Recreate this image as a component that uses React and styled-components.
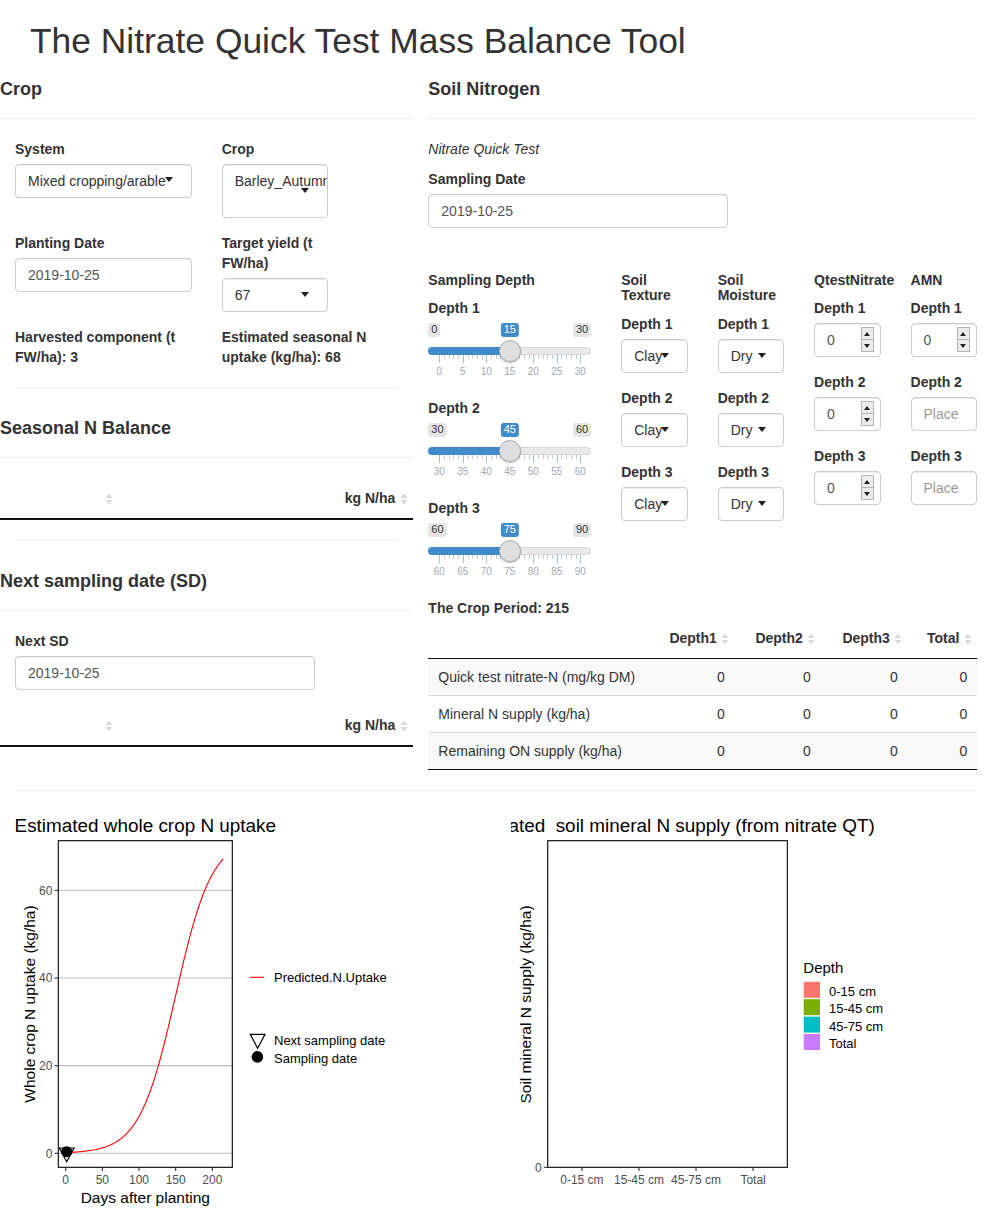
import React from 'react';
import styled, { createGlobalStyle } from 'styled-components';

const GlobalStyle = createGlobalStyle`
  html, body { margin: 0; padding: 0; background: #fff; }
  body {
    font-family: "Liberation Sans", Arial, sans-serif;
    font-size: 14px;
    line-height: 20px;
    color: #333;
  }
  * { box-sizing: border-box; }
`;

const Page = styled.div`
  width: 992px;
`;

const Title = styled.h1`
  margin: 0;
  padding: 21px 0 7.5px 30px;
  font-size: 35.4px;
  font-weight: 400;
  line-height: 40px;
  color: #333;
`;

const Main = styled.div`
  display: flex;
  align-items: flex-start;
`;

const LeftCol = styled.div`
  flex: none;
  width: 413.33px;
`;

const RightCol = styled.div`
  flex: none;
  width: 578.67px;
  padding: 0 15px;
`;

const SectionTitle = styled.h4`
  margin: 0;
  padding-top: 10px;
  font-size: 18px;
  font-weight: 700;
  line-height: 20px;
`;

const Divider = styled.hr`
  border: 0;
  border-top: 1px solid #eee;
  margin: ${(p) => (p.$top ?? 20)}px ${(p) => (p.$inset ? 15 : 0)}px ${(p) => (p.$bottom ?? 20)}px;
`;

const Inner = styled.div`
  padding: 0 15px;
`;

const InputGrid = styled.div`
  display: grid;
  grid-template-columns: 176.67px 176.67px;
  column-gap: 30px;
  align-items: start;
`;

const FormGroup = styled.div`
  margin-bottom: 15px;
  width: ${(p) => p.$w || '100%'};
  max-width: 100%;
`;

const Label = styled.label`
  display: block;
  font-weight: 700;
  margin-bottom: 5px;
  line-height: 20px;
`;

const BoldText = styled.div`
  font-weight: 700;
  line-height: 20px;
`;

const SelectBox = styled.div`
  position: relative;
  height: ${(p) => p.$h || 34}px;
  border: 1px solid #ccc;
  border-radius: 4px;
  padding: 6px 12px;
  line-height: 20px;
  color: #333;
  white-space: nowrap;
  overflow: hidden;
  background: #fff;
  box-shadow: inset 0 1px 1px rgba(0, 0, 0, 0.075);
`;

const Caret = styled.span`
  position: absolute;
  right: 17.5px;
  top: ${(p) => p.$top ?? 12}px;
  width: 0;
  height: 0;
  border-left: 4.5px solid transparent;
  border-right: 4.5px solid transparent;
  border-top: 5px solid #222;
`;

const TextInput = styled.input`
  display: block;
  width: 100%;
  height: 34px;
  border: 1px solid #ccc;
  border-radius: 4px;
  padding: 6px ${(p) => p.$padRight || 12}px 6px 12px;
  font-family: inherit;
  font-size: 14px;
  line-height: 20px;
  color: #555;
  background: #fff;
  box-shadow: inset 0 1px 1px rgba(0, 0, 0, 0.075);
  outline: none;
  &::placeholder { color: #999; }
`;

const NumberBox = styled.div`
  position: relative;
  height: 34px;
  border: 1px solid #ccc;
  border-radius: 4px;
  padding: 6px 12px;
  line-height: 20px;
  color: #555;
  box-shadow: inset 0 1px 1px rgba(0, 0, 0, 0.075);
`;

const Spinner = styled.div`
  position: absolute;
  right: 6px;
  top: 3px;
  width: 13px;
  height: 25px;
  border: 1px solid #b5b5b5;
  background: #ececec;
  display: flex;
  flex-direction: column;
`;

const SpinHalf = styled.div`
  flex: 1;
  display: flex;
  align-items: center;
  justify-content: center;
  & + & { border-top: 1px solid #b5b5b5; }
`;

const SpinArrow = styled.span`
  width: 0;
  height: 0;
  border-left: 3px solid transparent;
  border-right: 3px solid transparent;
  ${(p) => (p.$up ? 'border-bottom: 4px solid #222;' : 'border-top: 4px solid #222;')}
`;

const EmText = styled.p`
  margin: 0 0 10px;
  font-style: italic;
  line-height: 20px;
`;

const DepthRow = styled.div`
  display: grid;
  grid-template-columns: 192.89px 96.44px 96.44px 96.44px 96.45px;
  margin: 0 -15px;
`;

const DepthCol = styled.div`
  padding: 0 15px;
  min-width: 0;
`;

const ColHead = styled.h5`
  margin: 30.5px 0 10px;
  font-size: 14px;
  font-weight: 700;
  line-height: 15.4px;
  white-space: ${(p) => (p.$nowrap ? 'nowrap' : 'normal')};
`;

/* Slider */
const SliderBox = styled.div`
  position: relative;
  height: 60px;
`;

const Track = styled.div`
  position: absolute;
  left: 0;
  right: 0;
  top: 24px;
  height: 8px;
  border-radius: 4px;
  background: #e9e9e9;
  border: 1px solid #d6d6d6;
`;

const TrackFill = styled.div`
  position: absolute;
  left: 0;
  top: 24px;
  height: 8px;
  border-radius: 4px 0 0 4px;
  background: #428bca;
`;

const Handle = styled.div`
  position: absolute;
  top: 17px;
  width: 22px;
  height: 22px;
  margin-left: -11px;
  border-radius: 50%;
  background: #dedede;
  border: 1px solid #b3b3b3;
  box-shadow: 0 1px 2px rgba(0, 0, 0, 0.25);
`;

const Badge = styled.span`
  position: absolute;
  top: 0;
  font-size: 11px;
  line-height: 13.5px;
  padding: 0 3px;
  border-radius: 3px;
  background: ${(p) => (p.$active ? '#428bca' : 'rgba(0,0,0,0.1)')};
  color: ${(p) => (p.$active ? '#fff' : '#333')};
  ${(p) => p.$side === 'left' && 'left: 0;'}
  ${(p) => p.$side === 'right' && 'right: 0;'}
  ${(p) => p.$side === 'center' && 'transform: translateX(-50%);'}
`;

const GridArea = styled.div`
  position: absolute;
  left: 11px;
  right: 11px;
  top: 32px;
  height: 28px;
`;

const Tick = styled.span`
  position: absolute;
  top: 0;
  width: 1px;
  height: ${(p) => (p.$major ? 8 : 4)}px;
  background: ${(p) => (p.$major ? '#9fc0e0' : '#b9cbdc')};
`;

const TickLabel = styled.span`
  position: absolute;
  top: 11px;
  font-size: 10px;
  line-height: 12px;
  color: #a0a8b3;
  transform: translateX(-50%);
`;

function Slider({ min, max, value }) {
  const pct = (value - min) / (max - min);
  const pos = `calc(11px + (100% - 22px) * ${pct})`;
  const ticks = [];
  for (let i = 0; i <= 30; i++) {
    ticks.push(<Tick key={i} $major={i % 5 === 0} style={{ left: `${(i / 30) * 100}%` }} />);
  }
  const labels = [];
  for (let i = 0; i <= 6; i++) {
    labels.push(
      <TickLabel key={i} style={{ left: `${(i / 6) * 100}%` }}>
        {min + ((max - min) * i) / 6}
      </TickLabel>
    );
  }
  return (
    <SliderBox>
      <Track />
      <TrackFill style={{ width: pos }} />
      <GridArea>
        {ticks}
        {labels}
      </GridArea>
      <Badge $side="left">{min}</Badge>
      <Badge $side="right">{max}</Badge>
      <Badge $side="center" $active style={{ left: pos }}>{value}</Badge>
      <Handle style={{ left: pos }} />
    </SliderBox>
  );
}

function NumberInput({ value }) {
  return (
    <NumberBox>
      {value}
      <Spinner>
        <SpinHalf><SpinArrow $up /></SpinHalf>
        <SpinHalf><SpinArrow /></SpinHalf>
      </Spinner>
    </NumberBox>
  );
}

/* Tables */
const DTable = styled.table`
  width: 100%;
  table-layout: fixed;
  border-collapse: separate;
  border-spacing: 0;
  border-bottom: 1px solid #111;
`;

const ColW = styled.col`
  width: ${(p) => p.$w};
`;

const Th = styled.th`
  position: relative;
  padding: 10px 18px 10px 10px;
  border-bottom: 1px solid #111;
  font-weight: 700;
  text-align: ${(p) => p.$align || 'right'};
  line-height: 20px;
  white-space: nowrap;
`;

const Td = styled.td`
  padding: 8px 10px;
  border-top: 1px solid #ddd;
  text-align: ${(p) => p.$align || 'right'};
  line-height: 20px;
  white-space: nowrap;
`;

const Tr = styled.tr`
  background: ${(p) => (p.$odd ? '#f9f9f9' : '#fff')};
  &:first-child td { border-top: none; }
`;

const SortWrap = styled.span`
  position: absolute;
  right: 5.5px;
  top: 50%;
  margin-top: -7px;
  width: 8px;
  height: 14px;
  display: block;
`;

function SortIcon() {
  return (
    <SortWrap>
      <svg width="8" height="14" viewBox="0 0 8 14">
        <path d="M0.5 6 L4 1.5 L7.5 6 Z" fill="#d9d9d9" />
        <path d="M0.5 8 L4 12.5 L7.5 8 Z" fill="#d9d9d9" />
      </svg>
    </SortWrap>
  );
}

function HeaderOnlyTable() {
  return (
    <DTable>
      <colgroup>
        <ColW $w="118.5px" />
        <ColW $w="auto" />
      </colgroup>
      <thead>
        <tr>
          <Th><SortIcon /></Th>
          <Th>kg N/ha<SortIcon /></Th>
        </tr>
      </thead>
    </DTable>
  );
}

const CropPeriod = styled.div`
  font-weight: 700;
  line-height: 20px;
`;

const BottomRule = styled.hr`
  border: 0;
  border-top: 1px solid #eee;
  margin: 20px 15px;
`;

const PlotRow = styled.div`
  display: flex;
  gap: 30px;
  padding: 0 15px;
`;

const PlotSvg = styled.svg`
  display: block;
  width: 466px;
  height: 400px;
  overflow: hidden;
  font-family: "Liberation Sans", Arial, sans-serif;
  text { white-space: pre; }
`;

const FONT = '"Liberation Sans", Arial, sans-serif';

function UptakePlot() {
  const xs = (t) => 50.7 + 0.733 * t;
  const ys = (v) => 342.3 - 4.383 * v;
  const pts = [];
  for (let t = 0; t <= 215; t++) {
    const v = 72 / (1 + Math.exp(-0.0405 * (t - 150)));
    pts.push(`${xs(t).toFixed(2)},${ys(v).toFixed(2)}`);
  }
  return (
    <PlotSvg viewBox="0 0 466 400">
      <text x="130.3" y="20.7" fontSize="18.9" textAnchor="middle" fill="#000" fontFamily={FONT}>
        Estimated whole crop N uptake
      </text>
      {[0, 20, 40, 60].map((v) => (
        <g key={v}>
          <line x1="43.3" x2="217.3" y1={ys(v)} y2={ys(v)} stroke="#bdbdbd" strokeWidth="1.1" />
          <line x1="39.6" x2="43.3" y1={ys(v)} y2={ys(v)} stroke="#333" strokeWidth="1.1" />
          <text x="37.4" y={ys(v) + 4.3} fontSize="12" textAnchor="end" fill="#4d4d4d" fontFamily={FONT}>{v}</text>
        </g>
      ))}
      {[0, 50, 100, 150, 200].map((t) => (
        <g key={t}>
          <line x1={xs(t)} x2={xs(t)} y1="356.3" y2="360" stroke="#333" strokeWidth="1.1" />
          <text x={xs(t)} y="372.5" fontSize="12" textAnchor="middle" fill="#4d4d4d" fontFamily={FONT}>{t}</text>
        </g>
      ))}
      <polyline points={pts.join(' ')} fill="none" stroke="#ff0000" strokeWidth="1.1" />
      <polygon points="44.3,337 59.1,337 51.7,350.7" fill="none" stroke="#000" strokeWidth="1.2" />
      <circle cx="51.7" cy="340.7" r="5.5" fill="#000" />
      <rect x="43.3" y="29.7" width="174" height="326.6" fill="none" stroke="#000" strokeWidth="1.1" />
      <text x="130.3" y="392.3" fontSize="15.5" textAnchor="middle" fill="#000" fontFamily={FONT}>
        Days after planting
      </text>
      <text
        x="0"
        y="0"
        fontSize="15.5"
        textAnchor="middle"
        fill="#000"
        fontFamily={FONT}
        transform="translate(19.6 193) rotate(-90)"
      >
        Whole crop N uptake (kg/ha)
      </text>
      <line x1="235" x2="249" y1="166.3" y2="166.3" stroke="#ff0000" strokeWidth="1.1" />
      <text x="259" y="170.8" fontSize="13" fill="#000" fontFamily={FONT}>Predicted.N.Uptake</text>
      <polygon points="235.3,223.3 250,223.3 242.6,237.3" fill="none" stroke="#000" strokeWidth="1.2" />
      <text x="259" y="234.3" fontSize="13" fill="#000" fontFamily={FONT}>Next sampling date</text>
      <circle cx="242.4" cy="245.9" r="5.8" fill="#000" />
      <text x="259" y="251.8" fontSize="13" fill="#000" fontFamily={FONT}>Sampling date</text>
    </PlotSvg>
  );
}

function SupplyPlot() {
  const cats = ['0-15 cm', '15-45 cm', '45-75 cm', 'Total'];
  const xs = (i) => 36.7 + (239.6 * (0.6 + i)) / 4.2;
  const legend = [
    ['#F8766D', '0-15 cm'],
    ['#7CAE00', '15-45 cm'],
    ['#00BFC4', '45-75 cm'],
    ['#C77CFF', 'Total'],
  ];
  return (
    <PlotSvg viewBox="0 0 466 400">
      <text x="157" y="20.7" fontSize="18.9" textAnchor="middle" fill="#000" fontFamily={FONT}>
        {'Estimated  soil mineral N supply (from nitrate QT)'}
      </text>
      <rect x="36.7" y="29.7" width="239.6" height="326.6" fill="none" stroke="#000" strokeWidth="1.1" />
      <line x1="33" x2="36.7" y1="356.3" y2="356.3" stroke="#333" strokeWidth="1.1" />
      <text x="30.7" y="360.6" fontSize="12" textAnchor="end" fill="#4d4d4d" fontFamily={FONT}>0</text>
      {cats.map((c, i) => (
        <g key={c}>
          <line x1={xs(i)} x2={xs(i)} y1="356.3" y2="360" stroke="#333" strokeWidth="1.1" />
          <text x={xs(i)} y="372.5" fontSize="12" textAnchor="middle" fill="#4d4d4d" fontFamily={FONT}>{c}</text>
        </g>
      ))}
      <text
        x="0"
        y="0"
        fontSize="15.5"
        textAnchor="middle"
        fill="#000"
        fontFamily={FONT}
        transform="translate(19.6 193.5) rotate(-90)"
      >
        Soil mineral N supply (kg/ha)
      </text>
      <text x="292.3" y="161.6" fontSize="15" fill="#000" fontFamily={FONT}>Depth</text>
      {legend.map(([col, lab], i) => (
        <g key={lab}>
          <rect x="292.7" y={170.8 + i * 17.4} width="16.3" height="16" fill={col} />
          <text x="318" y={184.8 + i * 17.4} fontSize="13" fill="#000" fontFamily={FONT}>{lab}</text>
        </g>
      ))}
    </PlotSvg>
  );
}

const nutrientRows = [
  'Quick test nitrate-N (mg/kg DM)',
  'Mineral N supply (kg/ha)',
  'Remaining ON supply (kg/ha)',
];

export default function App() {
  return (
    <Page>
      <GlobalStyle />
      <Title>The Nitrate Quick Test Mass Balance Tool</Title>
      <Main>
        <LeftCol>
          <SectionTitle>Crop</SectionTitle>
          <Divider $top={19} />
          <Inner>
            <InputGrid>
              <FormGroup>
                <Label>System</Label>
                <SelectBox>
                  Mixed cropping/arable
                  <Caret $top={12} />
                </SelectBox>
              </FormGroup>
              <FormGroup $w="106px">
                <Label>Crop</Label>
                <SelectBox $h={54}>
                  Barley_Autumn
                  <Caret $top={23.5} />
                </SelectBox>
              </FormGroup>
              <FormGroup>
                <Label>Planting Date</Label>
                <TextInput readOnly value="2019-10-25" />
              </FormGroup>
              <FormGroup $w="106px">
                <Label>Target yield (t FW/ha)</Label>
                <SelectBox>
                  67
                  <Caret $top={13.5} />
                </SelectBox>
              </FormGroup>
              <BoldText>Harvested component (t FW/ha): 3</BoldText>
              <BoldText>Estimated seasonal N uptake (kg/ha): 68</BoldText>
            </InputGrid>
          </Inner>
          <Divider $inset />
          <SectionTitle>Seasonal N Balance</SectionTitle>
          <Divider $top={19} />
          <HeaderOnlyTable />
          <Divider $inset $bottom={20} />
          <SectionTitle>Next sampling date (SD)</SectionTitle>
          <Divider $top={19} />
          <Inner>
            <FormGroup $w="300px">
              <Label>Next SD</Label>
              <TextInput readOnly value="2019-10-25" />
            </FormGroup>
          </Inner>
          <HeaderOnlyTable />
        </LeftCol>

        <RightCol>
          <SectionTitle>Soil Nitrogen</SectionTitle>
          <Divider $top={19} />
          <EmText>Nitrate Quick Test</EmText>
          <FormGroup $w="300px">
            <Label>Sampling Date</Label>
            <TextInput readOnly value="2019-10-25" />
          </FormGroup>
          <DepthRow>
            <DepthCol>
              <ColHead>Sampling Depth</ColHead>
              {[
                [0, 30, 15],
                [30, 60, 45],
                [60, 90, 75],
              ].map(([mn, mx, v], i) => (
                <FormGroup key={i}>
                  <Label>Depth {i + 1}</Label>
                  <Slider min={mn} max={mx} value={v} />
                </FormGroup>
              ))}
            </DepthCol>
            <DepthCol>
              <ColHead>Soil Texture</ColHead>
              {[1, 2, 3].map((d) => (
                <FormGroup key={d}>
                  <Label>Depth {d}</Label>
                  <SelectBox>
                    Clay
                    <Caret $top={13} />
                  </SelectBox>
                </FormGroup>
              ))}
            </DepthCol>
            <DepthCol>
              <ColHead>Soil Moisture</ColHead>
              {[1, 2, 3].map((d) => (
                <FormGroup key={d}>
                  <Label>Depth {d}</Label>
                  <SelectBox>
                    Dry
                    <Caret $top={13} />
                  </SelectBox>
                </FormGroup>
              ))}
            </DepthCol>
            <DepthCol>
              <ColHead $nowrap>QtestNitrate</ColHead>
              {[1, 2, 3].map((d) => (
                <FormGroup key={d}>
                  <Label>Depth {d}</Label>
                  <NumberInput value={0} />
                </FormGroup>
              ))}
            </DepthCol>
            <DepthCol>
              <ColHead>AMN</ColHead>
              <FormGroup>
                <Label>Depth 1</Label>
                <NumberInput value={0} />
              </FormGroup>
              {[2, 3].map((d) => (
                <FormGroup key={d}>
                  <Label>Depth {d}</Label>
                  <TextInput readOnly placeholder="Placeholder" $padRight={17} />
                </FormGroup>
              ))}
            </DepthCol>
          </DepthRow>
          <CropPeriod>The Crop Period: 215</CropPeriod>
          <DTable>
            <colgroup>
              <ColW $w="217px" />
              <ColW $w="89.5px" />
              <ColW $w="86px" />
              <ColW $w="87px" />
              <ColW $w="69.5px" />
            </colgroup>
            <thead>
              <tr>
                <Th $align="left" />
                <Th>Depth1<SortIcon /></Th>
                <Th>Depth2<SortIcon /></Th>
                <Th>Depth3<SortIcon /></Th>
                <Th>Total<SortIcon /></Th>
              </tr>
            </thead>
            <tbody>
              {nutrientRows.map((r, i) => (
                <Tr key={r} $odd={i % 2 === 0}>
                  <Td $align="left">{r}</Td>
                  <Td>0</Td>
                  <Td>0</Td>
                  <Td>0</Td>
                  <Td>0</Td>
                </Tr>
              ))}
            </tbody>
          </DTable>
        </RightCol>
      </Main>
      <BottomRule />
      <PlotRow>
        <UptakePlot />
        <SupplyPlot />
      </PlotRow>
    </Page>
  );
}
